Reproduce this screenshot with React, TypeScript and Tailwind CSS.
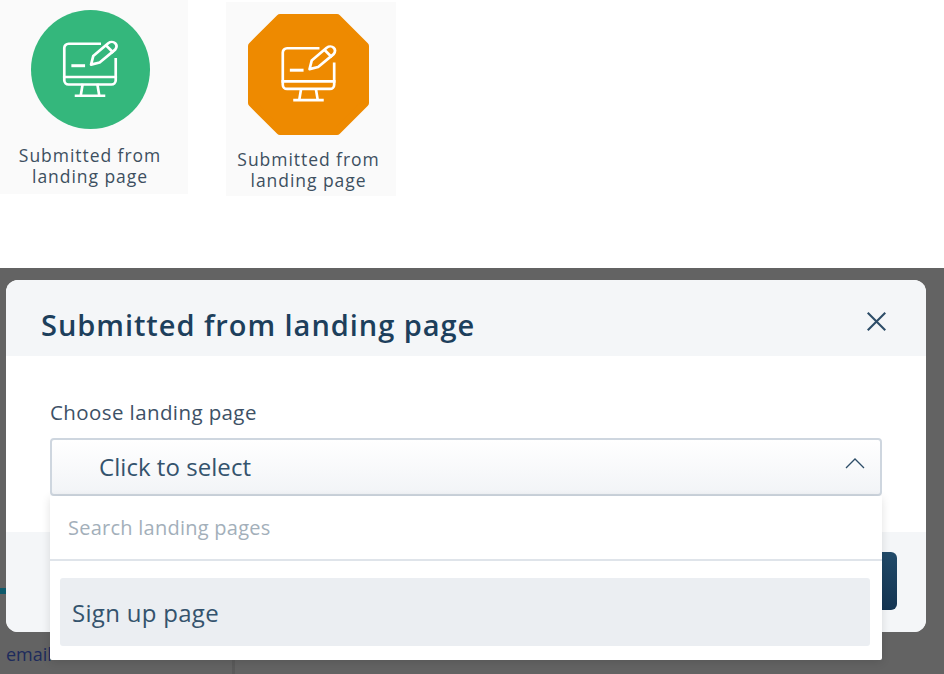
const font = { fontFamily: '"Open Sans", "Noto Sans", sans-serif' }

function MonitorIcon() {
  return (
    <g fill="none" stroke="white" strokeWidth="2.500" strokeLinecap="square">
      <path d="M37 3.500H8a4 4 0 0 0-4 4v30a4 4 0 0 0 4 4h40a4 4 0 0 0 4-4V18" />
      <path d="M4 34.500h48" />
      <path d="M12 24h10" strokeWidth="2.800" />
      <path d="M21 42l-1.500 9M35 42l1.500 9M15 52h26" />
      <path d="M29 23l2-8L45 3c2-1.500 5-1.500 6.500 0s1.500 4 0 6L37 21z" strokeLinejoin="round" />
      <path d="M43.500 5.500l5.500 5.500" />
    </g>
  )
}

function Caption({ className }: { className: string }) {
  return (
    <p className={`text-[17.500px] leading-[21px] text-center text-[#3d4f5f] tracking-[0.950px] ${className}`}>
      Submitted from
      <br />
      landing page
    </p>
  )
}

export default function App() {
  return (
    <div className="w-[944px] h-[674px] overflow-hidden bg-white flex flex-col" style={font}>
      <div className="h-[268px] flex items-start shrink-0">
        <div className="w-[188px] h-[194px] pt-[10px] pr-[8px] flex flex-col items-center bg-[#fafafa]">
          <div className="w-[119px] h-[119px] rounded-full bg-[#34b77c] flex items-center justify-center">
            <svg width="60" height="60" viewBox="0 0 56 56">
              <MonitorIcon />
            </svg>
          </div>
          <Caption className="mt-[16px]" />
        </div>
        <div className="w-[170px] h-[194px] mt-[2px] ml-[38px] pt-[12px] pr-[5px] flex flex-col items-center bg-[#fafafa]">
          <svg width="121" height="121" viewBox="0 0 121 121">
            <polygon points="32,4 89,4 117,32 117,89 89,117 32,117 4,89 4,32" fill="#ee8a00" stroke="#ee8a00" strokeWidth="8" strokeLinejoin="round" />
            <g transform="translate(30.500 30.500) scale(1.071)">
              <MonitorIcon />
            </g>
          </svg>
          <Caption className="mt-[14px]" />
        </div>
      </div>

      <div className="relative flex-1 bg-[#636363] pt-[12px] pl-[6px]">
        <div className="relative w-[920px] h-[352px] rounded-[12px] bg-white overflow-hidden flex flex-col">
          <div className="h-[76px] shrink-0 bg-[#f4f6f8] flex items-center justify-between pl-[35px] pr-[39px]">
            <h2 className="text-[29px] font-semibold text-[#1d3f5c] tracking-[0.950px] pt-[13px]">Submitted from landing page</h2>
            <svg width="21" height="21" viewBox="0 0 24 24" fill="none" stroke="#2d4d68" strokeWidth="2.400" className="mt-[6px]">
              <path d="M2 2l20 20M22 2L2 22" />
            </svg>
          </div>
          <div className="flex-1 px-[44px] pt-[43px]">
            <label className="block text-[20.500px] leading-[26px] text-[#3d5166] tracking-[0.400px]">Choose landing page</label>
            <div className="mt-[13px] h-[58px] rounded-[4px] border-2 border-[#ced6df] bg-gradient-to-b from-white to-[#f2f4f7] flex items-center justify-between pl-[47px] pr-[15px]">
              <span className="text-[24px] text-[#34536d] tracking-[0.050px]">Click to select</span>
              <svg width="20" height="12" viewBox="0 0 20 12" fill="none" stroke="#2d4d68" strokeWidth="1.300" className="mb-[9px]">
                <path d="M1 11l9-9 9 9" />
              </svg>
            </div>
          </div>
          <div className="h-[100px] shrink-0 bg-[#f4f6f8] flex justify-end pt-[20px] pr-[29px]">
            <div className="w-[120px] h-[58px] rounded-[6px] bg-gradient-to-b from-[#214a69] to-[#143552]" />
          </div>
        </div>

        <div className="absolute left-0 top-[320px] w-[6px] h-[6px] bg-[#0e5a6b]" />
        <span className="absolute left-[6px] top-[373px] text-[18px] text-[#1d2b5c]">email</span>
        <div className="absolute left-[232px] top-[364px] w-[3px] h-[42px] bg-[#5a5a5a]" />

        <div className="absolute left-[50px] top-[228px] w-[832px] h-[164px] bg-white rounded-b-[2px] shadow-[0_2px_10px_rgba(0,0,0,0.12)]">
          <div className="h-[65px] border-b-2 border-[#dfe4ea] flex items-center pl-[18px] text-[20px] text-[#a3afba] tracking-[0.250px]">
            Search landing pages
          </div>
          <div className="ml-[10px] mr-[12px] mt-[17px] h-[68px] rounded-[3px] bg-[#ebeef2] flex items-center pl-[12px] text-[24px] text-[#34536d] tracking-[0.300px]">
            <span className="pt-[2px]">Sign up page</span>
          </div>
        </div>
      </div>
    </div>
  )
}
